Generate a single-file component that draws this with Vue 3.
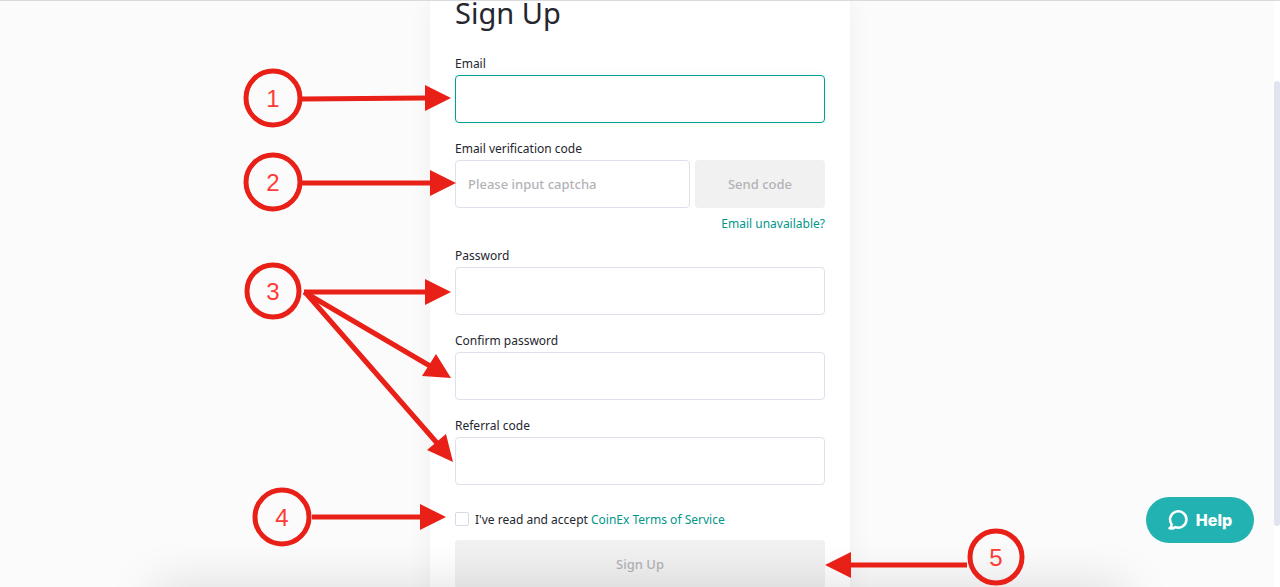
<script setup>
import { ref } from 'vue'

const email = ref('')
const captcha = ref('')
const password = ref('')
const confirmation = ref('')
const referral = ref('')
const accepted = ref(false)

const steps = [
  { n: 1, x: 273, y: 98, r: 27 },
  { n: 2, x: 273, y: 182, r: 27 },
  { n: 3, x: 273, y: 291, r: 26 },
  { n: 4, x: 282, y: 517, r: 27 },
  { n: 5, x: 996, y: 557, r: 26 },
]

const arrows = [
  { line: 'M302 99 L426 98', head: '425,85 451,98 425,111' },
  { line: 'M302 183 H431', head: '430,170 456,183 430,196' },
  { line: 'M304 292 H426', head: '425,279 451,292 425,305' },
  { line: 'M304 292 L430 366', head: '436,354 451,378 422,376' },
  { line: 'M305 292 L437 443', head: '446,434 453,462 427,450' },
  { line: 'M312 517 H421', head: '420,504 446,517 420,530' },
  { line: 'M967 565 H850', head: '851,552 825,565 851,578' },
]
</script>

<template>
  <div class="page">
    <main class="card">
      <h1>Sign Up</h1>
      <form @submit.prevent>
        <div class="field">
          <label for="email">Email</label>
          <input id="email" v-model="email" class="box active" type="email" />
        </div>
        <div class="field">
          <label for="captcha">Email verification code</label>
          <div class="row">
            <input id="captcha" v-model="captcha" class="box" type="text" placeholder="Please input captcha" />
            <button class="grey send" type="button">Send code</button>
          </div>
          <a class="link help-link" href="#">Email unavailable?</a>
        </div>
        <div class="field">
          <label for="password">Password</label>
          <input id="password" v-model="password" class="box" type="password" />
        </div>
        <div class="field">
          <label for="confirmation">Confirm password</label>
          <input id="confirmation" v-model="confirmation" class="box" type="password" />
        </div>
        <div class="field">
          <label for="referral">Referral code</label>
          <input id="referral" v-model="referral" class="box" type="text" />
        </div>
        <div class="terms">
          <input id="accept" v-model="accepted" type="checkbox" />
          <label for="accept">I've read and accept <a class="link" href="#">CoinEx Terms of Service</a></label>
        </div>
        <button class="grey submit" type="submit">Sign Up</button>
      </form>
    </main>

    <div class="bottom-shade"></div>
    <div class="track"><div class="thumb"></div></div>

    <button class="help" type="button">
      <svg width="22" height="22" viewBox="0 0 22 22" fill="none" aria-hidden="true">
        <path d="M3.6 15.2 A8.2 8.2 0 1 1 7.4 18.1 C5.8 19.2 3.6 19.6 1.6 19.3 C3 18.3 3.8 17 3.6 15.2 Z" stroke="#fff" stroke-width="2.5" stroke-linejoin="round" />
      </svg>
      <span>Help</span>
    </button>

    <svg class="notes" width="1280" height="587" viewBox="0 0 1280 587">
      <g v-for="(a, i) in arrows" :key="i">
        <path :d="a.line" class="stroke" />
        <polygon :points="a.head" class="head" />
      </g>
      <g v-for="s in steps" :key="s.n">
        <circle :cx="s.x" :cy="s.y" :r="s.r" class="stroke" />
        <text :x="s.x" :y="s.y + 9" text-anchor="middle">{{ s.n }}</text>
      </g>
    </svg>
  </div>
</template>

<style>
body {
  margin: 0;
}
</style>

<style scoped>
.page {
  position: relative;
  box-sizing: border-box;
  height: 100vh;
  overflow: hidden;
  border-top: 1px solid #d9d9e0;
  background: #fbfbfb;
  color: #25262e;
  font-family: "Noto Sans", "Open Sans", sans-serif;
  font-size: 12px;
}
.card {
  box-sizing: border-box;
  max-width: 420px;
  margin: 0 auto;
  padding: 0 25px 40px;
  background: #fff;
  box-shadow: 0 0 24px rgba(0, 0, 0, 0.05);
}
h1 {
  margin: 0 0 28px;
  font-size: 29px;
  font-weight: 400;
  line-height: 24px;
}
.field {
  display: flex;
  flex-direction: column;
  margin-bottom: 15px;
}
label {
  line-height: 22px;
}
.box {
  box-sizing: border-box;
  width: 100%;
  min-width: 0;
  height: 48px;
  padding: 0 12px;
  border: 1px solid #e0e0ec;
  border-radius: 4px;
  outline: none;
  background: #fff;
  color: inherit;
  font: 500 13px "Noto Sans", "Open Sans", sans-serif;
}
.box::placeholder {
  color: #b2b3b7;
  opacity: 1;
}
.active {
  border-color: #00a091;
  box-shadow: 0 0 8px rgba(0, 160, 145, 0.08);
}
.row {
  display: flex;
  gap: 5px;
}
.row .box {
  flex: 1;
}
.grey {
  height: 48px;
  padding: 0;
  border: 0;
  border-radius: 4px;
  background: #f1f1f1;
  color: #b2b3b7;
  font: 500 13px "Noto Sans", "Open Sans", sans-serif;
}
.send {
  width: 130px;
}
.submit {
  display: block;
  width: 100%;
}
.link {
  color: #009688;
  text-decoration: none;
}
.help-link {
  align-self: flex-end;
  padding-top: 10px;
  line-height: 12px;
}
.terms {
  display: flex;
  align-items: center;
  gap: 6px;
  margin: 22px 0 9px;
}
.terms label {
  padding-top: 2px;
}
.terms input {
  appearance: none;
  width: 14px;
  height: 14px;
  margin: 0;
  border: 1px solid #d9d9e4;
  border-radius: 2px;
  background: #fff;
}
.bottom-shade {
  position: absolute;
  right: 12%;
  bottom: -40px;
  left: 12%;
  height: 40px;
  box-shadow: 0 0 50px rgba(0, 0, 0, 0.14);
}
.track {
  position: absolute;
  top: 0;
  right: 0;
  bottom: 0;
  width: 6px;
  background: #fff;
}
.thumb {
  height: 76%;
  margin-top: 80px;
  border-radius: 3px;
  background: #e1e4ee;
}
.help {
  position: absolute;
  right: 26px;
  bottom: 44px;
  display: flex;
  align-items: center;
  justify-content: center;
  gap: 6px;
  width: 108px;
  height: 46px;
  padding: 0;
  border: 0;
  border-radius: 23px;
  background: #22b2b2;
  color: #fff;
  font: 800 16px Inter, sans-serif;
}
.notes {
  position: absolute;
  top: -1px;
  left: 0;
  pointer-events: none;
}
.stroke {
  fill: none;
  stroke: #e92017;
  stroke-width: 5px;
}
.head {
  fill: #e92017;
}
text {
  fill: #ff3b36;
  font: 24px "Liberation Sans", Arial, sans-serif;
}
</style>
